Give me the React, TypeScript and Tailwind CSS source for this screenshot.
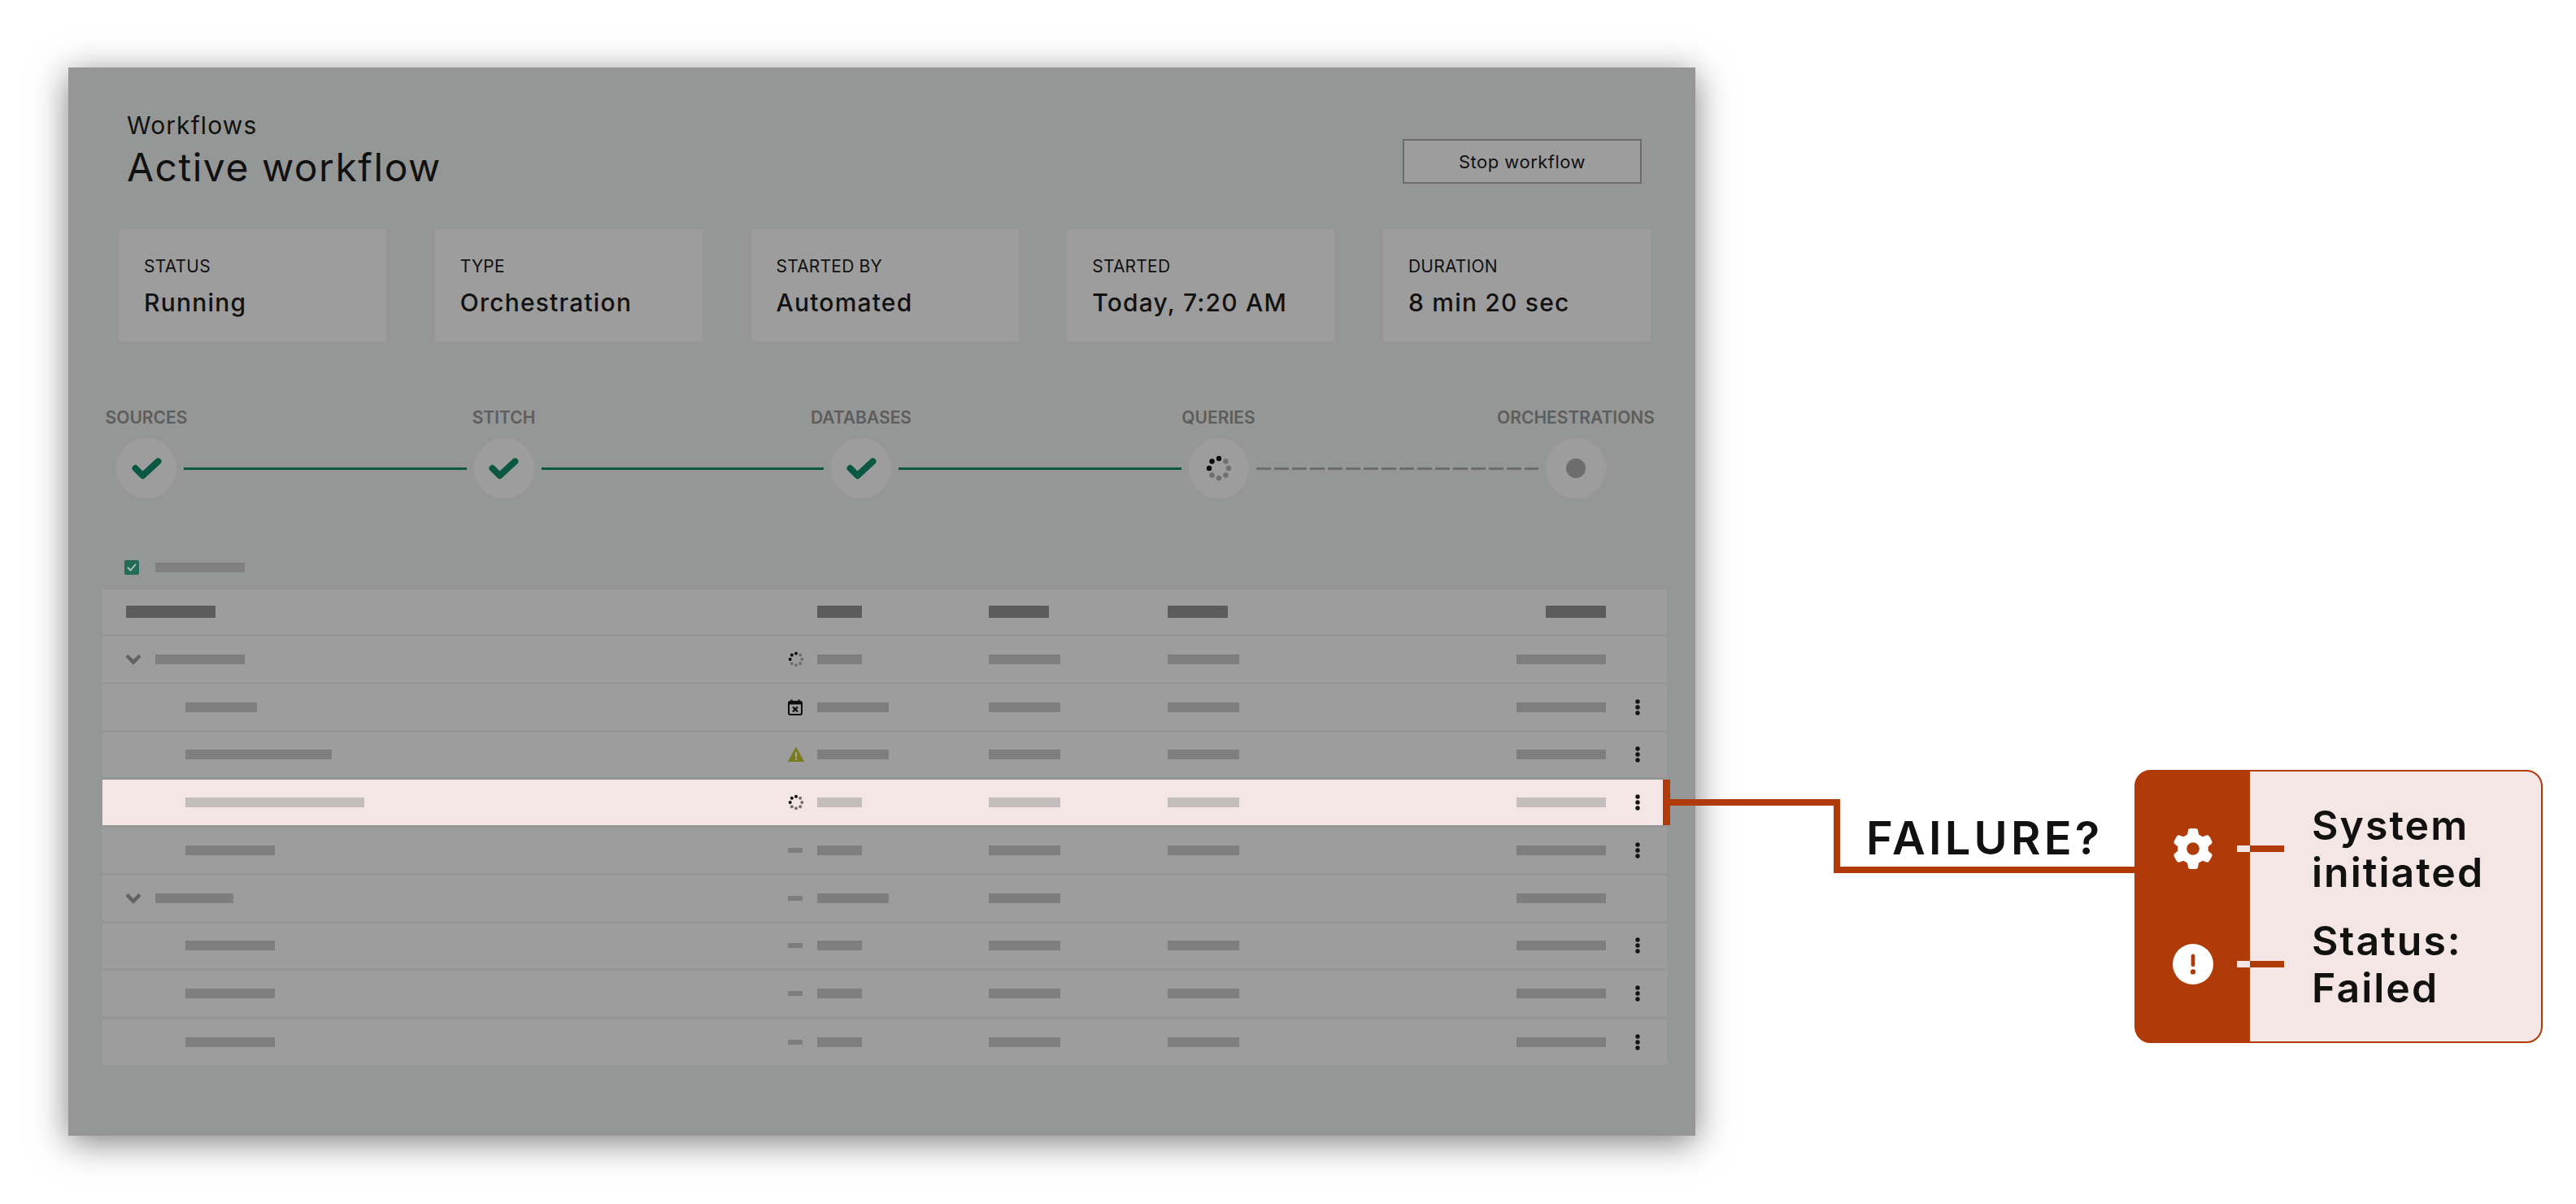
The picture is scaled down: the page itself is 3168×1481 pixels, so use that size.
import { FaGear, FaCircleExclamation } from 'react-icons/fa6';

const cards = [
  { label: 'STATUS', value: 'Running' },
  { label: 'TYPE', value: 'Orchestration' },
  { label: 'STARTED BY', value: 'Automated' },
  { label: 'STARTED', value: 'Today, 7:20 AM' },
  { label: 'DURATION', value: '8 min 20 sec' },
];

type IconKind = 'spinner' | 'calendar' | 'warning' | 'dash';

interface Row {
  group?: boolean;
  name: string;
  icon: IconKind;
  a: string;
  b: string;
  c?: string;
  menu?: boolean;
  active?: boolean;
}

const rows: Row[] = [
  { group: true, name: 'w-[110px]', icon: 'spinner', a: 'w-[55px]', b: 'w-[88px]', c: 'w-[88px]' },
  { name: 'w-[88px]', icon: 'calendar', a: 'w-[88px]', b: 'w-[88px]', c: 'w-[88px]', menu: true },
  { name: 'w-[180px]', icon: 'warning', a: 'w-[88px]', b: 'w-[88px]', c: 'w-[88px]', menu: true },
  { name: 'w-[220px]', icon: 'spinner', a: 'w-[55px]', b: 'w-[88px]', c: 'w-[88px]', menu: true, active: true },
  { name: 'w-[110px]', icon: 'dash', a: 'w-[55px]', b: 'w-[88px]', c: 'w-[88px]', menu: true },
  { group: true, name: 'w-[96px]', icon: 'dash', a: 'w-[88px]', b: 'w-[88px]' },
  { name: 'w-[110px]', icon: 'dash', a: 'w-[55px]', b: 'w-[88px]', c: 'w-[88px]', menu: true },
  { name: 'w-[110px]', icon: 'dash', a: 'w-[55px]', b: 'w-[88px]', c: 'w-[88px]', menu: true },
  { name: 'w-[110px]', icon: 'dash', a: 'w-[55px]', b: 'w-[88px]', c: 'w-[88px]', menu: true },
];

function Spinner({ size, radius, dot }: { size: number; radius: number; dot: number }) {
  const c = size / 2;
  return (
    <svg width={size} height={size} viewBox={`0 0 ${size} ${size}`}>
      {[0, 1, 2, 3, 4, 5, 6, 7].map((i) => {
        const angle = (i * Math.PI) / 4;
        return (
          <circle
            key={i}
            cx={c + radius * Math.sin(angle)}
            cy={c - radius * Math.cos(angle)}
            r={dot}
            fill={i === 0 || i >= 6 ? '#0c0c0c' : '#6f6f6f'}
          />
        );
      })}
    </svg>
  );
}

function Check() {
  return (
    <svg width="37" height="27" viewBox="0 0 37 27" fill="none">
      <path
        d="M4.5 13L13.5 22L32.5 4.5"
        stroke="#0a5742"
        strokeWidth="8"
        strokeLinecap="round"
        strokeLinejoin="round"
      />
    </svg>
  );
}

function StatusIcon({ kind }: { kind: IconKind }) {
  if (kind === 'spinner') return <Spinner size={20} radius={7.3} dot={2} />;
  if (kind === 'calendar') {
    return (
      <svg width="18" height="20" viewBox="0 0 18 20" fill="none">
        <path d="M4.5 0.5V4M13.5 0.5V4" stroke="#0c0c0c" strokeWidth="2" />
        <rect x="1" y="3" width="16" height="16" rx="2" stroke="#0c0c0c" strokeWidth="2" />
        <rect x="1" y="3" width="16" height="3.5" fill="#0c0c0c" />
        <path d="M6 9.5L12 15.5M12 9.5L6 15.5" stroke="#0c0c0c" strokeWidth="2.2" />
      </svg>
    );
  }
  if (kind === 'warning') {
    return (
      <svg width="20" height="18" viewBox="0 0 20 18">
        <path d="M10 0.5L19.5 17.5H0.5Z" fill="#7b7a1c" stroke="#7b7a1c" strokeLinejoin="round" />
        <rect x="9" y="6" width="2" height="6.5" fill="#a9a99a" />
        <rect x="9" y="13.8" width="2" height="2" fill="#a9a99a" />
      </svg>
    );
  }
  return <div className="h-[6px] w-[18px] bg-[#7d7d7d]" />;
}

function Kebab() {
  return (
    <svg width="6" height="20" viewBox="0 0 6 20" fill="#141414">
      <circle cx="3" cy="3" r="2.7" />
      <circle cx="3" cy="10" r="2.7" />
      <circle cx="3" cy="17" r="2.7" />
    </svg>
  );
}

function Chevron() {
  return (
    <svg width="20" height="14" viewBox="0 0 20 14" fill="none">
      <path d="M2 2.5L10 10.5L18 2.5" stroke="#626262" strokeWidth="4.5" />
    </svg>
  );
}

function StepLine({ dashed }: { dashed?: boolean }) {
  return (
    <div className="mt-[39px] flex h-[74px] flex-1 items-center px-[9px]">
      {dashed ? (
        <div className="h-[3px] w-full bg-[repeating-linear-gradient(90deg,#6d6d6d_0,#6d6d6d_18px,transparent_18px,transparent_22px)]" />
      ) : (
        <div className="h-[3px] w-full bg-[#0a5742]" />
      )}
    </div>
  );
}

function Step({ label, children }: { label: string; children: React.ReactNode }) {
  return (
    <div className="flex w-[74px] flex-col items-center">
      <div className="h-[26px] pt-[1px] whitespace-nowrap text-[21px] leading-[26px] font-semibold text-[#5c5d5c]">
        {label}
      </div>
      <div className="mt-[13px] flex h-[74px] w-[74px] shrink-0 items-center justify-center rounded-full bg-[#9d9d9d]">
        {children}
      </div>
    </div>
  );
}

function TableRow({ row }: { row: Row }) {
  const tone = row.active ? 'bg-[#c4bdbd]' : 'bg-[#7e7e7e]';
  return (
    <div
      className={`relative grid h-[55.75px] grid-cols-[843px_36px_211px_220px_1fr_75px] items-center last:mt-[1px] ${
        row.active ? 'bg-[#f5e6e6]' : 'bg-[#9d9d9d]'
      }`}
    >
      <div className={`flex items-center ${row.group ? 'pl-[28px]' : 'pl-[102px]'}`}>
        {row.group && (
          <div className="mr-[7px] flex w-[30px] justify-start">
            <Chevron />
          </div>
        )}
        <div className={`h-[12px] ${row.name} ${tone}`} />
      </div>
      <div className="flex">
        <StatusIcon kind={row.icon} />
      </div>
      <div className={`h-[12px] ${row.a} ${tone}`} />
      <div className={`h-[12px] ${row.b} ${tone}`} />
      <div className="flex items-center justify-between">
        {row.c ? <div className={`h-[12px] ${row.c} ${tone}`} /> : <div />}
        <div className={`h-[12px] w-[110px] ${tone}`} />
      </div>
      <div className="flex pl-[36px]">{row.menu && <Kebab />}</div>
      {row.active && <div className="absolute top-0 right-[-4px] bottom-0 w-[9px] bg-[#b03a08]" />}
    </div>
  );
}

function CalloutItem({ icon, lines }: { icon: React.ReactNode; lines: string[] }) {
  return (
    <div className="flex items-center">
      <div className="flex w-[140px] justify-center text-white">{icon}</div>
      <div className="-ml-[16px] h-[8px] w-[16px] bg-[#f5e6e6]" />
      <div className="h-[8px] w-[42px] bg-[#b03a08]" />
      <div className="ml-[34px] text-[50px] leading-[58px] font-semibold tracking-[2px] text-[#111]">
        {lines.map((line) => (
          <div key={line}>{line}</div>
        ))}
      </div>
    </div>
  );
}

export default function App() {
  return (
    <div className="relative flex h-[1481px] w-[3168px] overflow-hidden bg-white pt-[83px] pl-[84px] font-['Inter',sans-serif]">
      {/* Main panel */}
      <div className="h-[1314px] w-[2001px] shrink-0 bg-[#959796] shadow-[0_8px_40px_rgba(0,0,0,0.5)]">
        <div className="flex h-[199px] justify-between pr-[66px] pl-[72px]">
          <div className="pt-[53px] text-[#111]">
            <div className="text-[30px] leading-[36px] tracking-[1.1px]">Workflows</div>
            <div className="mt-[6px] text-[48px] leading-[56px] tracking-[1.5px]">Active workflow</div>
          </div>
          <button className="mt-[88px] h-[55px] w-[294px] border-2 border-[#6b6b6b] bg-[#9d9d9d] pt-[2px] text-[22px] tracking-[0.5px] text-[#111]">
            Stop workflow
          </button>
        </div>

        <div className="ml-[62px] flex w-[1884px] justify-between">
          {cards.map((card) => (
            <div key={card.label} className="h-[138px] w-[329px] bg-[#9d9d9d] pt-[33px] pl-[31px] text-[#111]">
              <div className="text-[21px] leading-[26px] tracking-[0.2px]">{card.label}</div>
              <div className="mt-[12px] text-[30px] leading-[38px] font-medium tracking-[1.2px]">{card.value}</div>
            </div>
          ))}
        </div>

        <div className="mt-[80px] ml-[59px] flex w-[1832px]">
          <Step label="SOURCES"><Check /></Step>
          <StepLine />
          <Step label="STITCH"><Check /></Step>
          <StepLine />
          <Step label="DATABASES"><Check /></Step>
          <StepLine />
          <Step label="QUERIES"><Spinner size={36} radius={12} dot={3.2} /></Step>
          <StepLine dashed />
          <Step label="ORCHESTRATIONS"><div className="h-[24px] w-[24px] rounded-full bg-[#6d6d6d]" /></Step>
        </div>

        <div className="mt-[76px] flex h-[18px] items-center pl-[69px]">
          <div className="flex h-[18px] w-[18px] items-center justify-center rounded-[2px] bg-[#226b57]">
            <svg width="12" height="10" viewBox="0 0 12 10" fill="none">
              <path d="M1 5L4.5 8.5L11 1" stroke="#b9c6c0" strokeWidth="1.8" />
            </svg>
          </div>
          <div className="ml-[20px] h-[12px] w-[110px] bg-[#808080]" />
        </div>

        <div className="mt-[18px] ml-[42px] flex w-[1924px] flex-col gap-[3px]">
          <div className="grid h-[55px] grid-cols-[843px_36px_211px_220px_1fr_75px] items-center bg-[#9d9d9d]">
            <div className="pl-[29px]"><div className="h-[15px] w-[110px] bg-[#5c5c5c]" /></div>
            <div />
            <div className="h-[15px] w-[55px] bg-[#5c5c5c]" />
            <div className="h-[15px] w-[74px] bg-[#5c5c5c]" />
            <div className="flex items-center justify-between">
              <div className="h-[15px] w-[74px] bg-[#5c5c5c]" />
              <div className="h-[15px] w-[74px] bg-[#5c5c5c]" />
            </div>
            <div />
          </div>
          {rows.map((row, i) => (
            <TableRow key={i} row={row} />
          ))}
        </div>
      </div>

      {/* Connector from the failed row to the callout */}
      <svg className="absolute top-[983px] left-[2050px]" width="576" height="92" viewBox="0 0 576 92" fill="none">
        <path d="M0 4H209V87H576" stroke="#b03a08" strokeWidth="8" />
      </svg>
      <div className="absolute top-[1003px] left-[2295px] text-[56px] leading-[56px] font-semibold tracking-[4.2px] text-[#111]">
        FAILURE?
      </div>

      {/* Callout */}
      <div className="absolute top-[947px] left-[2625px] flex h-[336px] w-[502px] flex-col gap-[26px] overflow-hidden rounded-[20px] border-2 border-[#b03a08] bg-[linear-gradient(90deg,#b03a08_140px,#f5e6e6_140px)] pt-[37px]">
        <CalloutItem icon={<FaGear size={50} />} lines={['System', 'initiated']} />
        <CalloutItem icon={<FaCircleExclamation size={50} />} lines={['Status:', 'Failed']} />
      </div>
    </div>
  );
}
